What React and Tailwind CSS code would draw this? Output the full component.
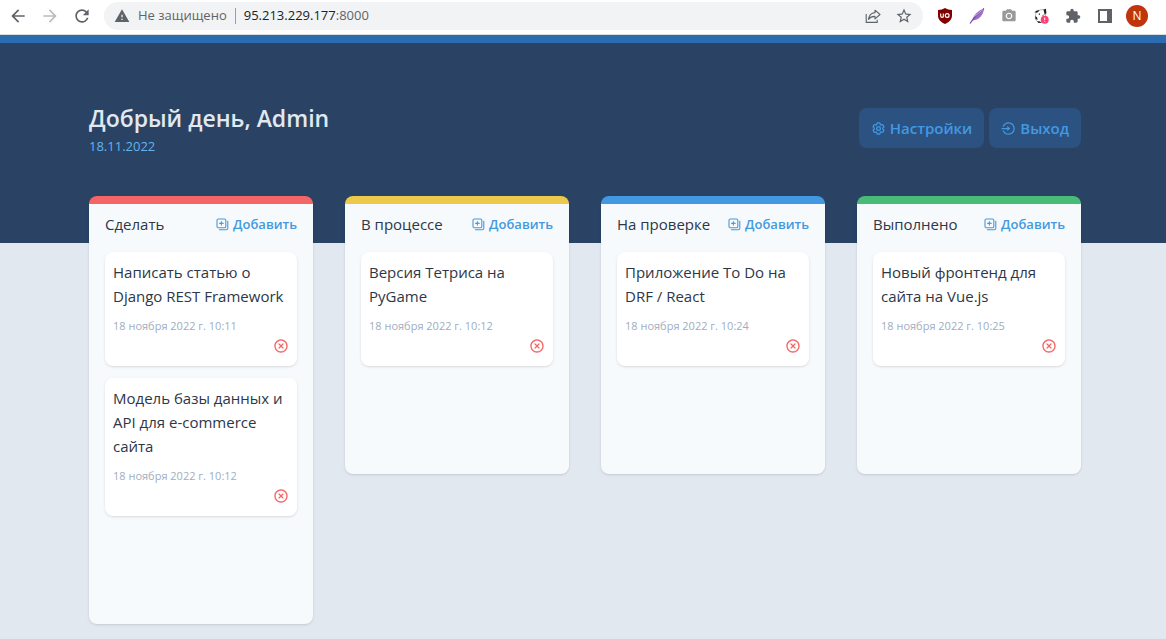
import React, { useState } from 'react'
import { RiCloseCircleLine, RiLoginCircleLine } from 'react-icons/ri'
import { HiOutlineCog6Tooth } from 'react-icons/hi2'
import { MdArrowBack, MdArrowForward, MdCameraAlt, MdExtension, MdRefresh, MdStarBorder, MdWarning } from 'react-icons/md'

const COLUMNS = [
  {
    id: 'todo',
    title: 'Сделать',
    border: 'border-[#f56565]',
    tasks: [
      { id: 1, text: 'Написать статью о Django REST Framework', date: '18 ноября 2022 г. 10:11' },
      { id: 2, text: 'Модель базы данных и API для e-commerce сайта', date: '18 ноября 2022 г. 10:12' },
    ],
  },
  {
    id: 'progress',
    title: 'В процессе',
    border: 'border-[#ecc94b]',
    tasks: [{ id: 3, text: 'Версия Тетриса на PyGame', date: '18 ноября 2022 г. 10:12' }],
  },
  {
    id: 'review',
    title: 'На проверке',
    border: 'border-[#4299e1]',
    tasks: [{ id: 4, text: 'Приложение To Do на DRF / React', date: '18 ноября 2022 г. 10:24' }],
  },
  {
    id: 'done',
    title: 'Выполнено',
    border: 'border-[#48bb78]',
    tasks: [{ id: 5, text: 'Новый фронтенд для сайта на Vue.js', date: '18 ноября 2022 г. 10:25' }],
  },
]

// ── Icons ─────────────────────────────────────────────────────────────────────
function AddIcon() {
  return (
    <svg viewBox="0 0 13 13" className="size-[13px] shrink-0" fill="none" stroke="currentColor" strokeWidth="1.1">
      <rect x="1" y="1" width="8.8" height="8.8" rx="1.4" />
      <path d="M5.4 3.2v4.400M3.200 5.400h4.400M11.800 2.800v7.400c0 1-.6 1.600-1.600 1.600H3" />
    </svg>
  )
}

function ShareIcon() {
  return (
    <svg viewBox="0 0 16 16" className="size-4" fill="none" stroke="currentColor" strokeWidth="1.1" strokeLinejoin="round">
      <path d="M1.2 6v8.4h11v-2.6" />
      <path d="M10 2.2l5 4.3-5 4.3V8.4C7 8.3 5 9.2 3.4 11.4 3.9 7.6 6.2 5 10 4.6z" />
    </svg>
  )
}

function ShieldIcon() {
  return (
    <svg viewBox="0 0 16 16" className="size-4">
      <path d="M8 0c2 1.3 4.2 1.9 7 2v5.5c0 4-2.8 6.5-7 8.500-4.200-2-7-4.500-7-8.500V2c2.800-.1 5-.7 7-2z" fill="#800000" />
      <path d="M3.700 5.500v2.600a1.300 1.300 0 0 0 2.600 0V5.500M6.300 5.500v4" fill="none" stroke="#fff" strokeWidth="1.1" />
      <circle cx="10.2" cy="7.5" r="1.9" fill="none" stroke="#fff" strokeWidth="1.2" />
    </svg>
  )
}

function FeatherIcon() {
  return (
    <svg viewBox="0 0 16 16" className="size-4">
      <path d="M15 .5c-.2 3.500-2 7.500-5 9.700-2 1.500-4.400 2-6.500 2.300C3.600 8 9 2.500 15 .5z" fill="#9b6fc6" />
      <path d="M1 15.500C4.500 10 9 5.500 15 .5" fill="none" stroke="#7443a8" strokeWidth="1.1" />
      <path d="M5.500 8.500L14 1.500" stroke="#cfb4e6" strokeWidth="1" />
    </svg>
  )
}

function CowIcon() {
  return (
    <svg viewBox="0 0 16 16" className="size-4">
      <path d="M4 3.500C6 1.500 10 1 12.500 2.500c1 3.500-.5 8.500-4 12-3 .5-5-1-6-3.500C2 8 2.500 5.500 4 3.500z" fill="#fff" stroke="#999" strokeWidth=".7" />
      <path d="M1.500 4.500C3 2.500 5 2 6.500 2.500L4.500 4.500zM10.500 1.500l2.500-.8.3 4.300-1.600 2zM2.200 8l2 1.500.3 2.500-2-1zM5.300 6l1.500-.8.2 2zM9.300 7.500l1-1.200.2 1.800zM4 13l3 .5 1.500 1.200-3 .3z" fill="#222" />
      <circle cx="11.700" cy="11.700" r="4" fill="#ff3f74" />
      <path d="M11.700 9.700v2.400M11.700 12.900v.8" stroke="#fff" strokeWidth="1" />
    </svg>
  )
}

function PanelIcon() {
  return (
    <svg viewBox="0 0 14 14" className="size-3.5">
      <path d="M0 0h14v14H0zM2 2v10h7V2z" fill="#5f6368" fillRule="evenodd" />
    </svg>
  )
}

// ── Browser bar ───────────────────────────────────────────────────────────────
function BrowserBar() {
  return (
    <div className="flex h-[35px] items-start border-b border-[#dadce0] bg-white pt-0.5 pr-[18px] pl-2 text-[#5f6368]">
      <div className="flex h-7 items-center gap-3">
        <button type="button" aria-label="Назад"><MdArrowBack className="size-5" /></button>
        <button type="button" aria-label="Вперёд" className="text-[#babcbe]"><MdArrowForward className="size-5" /></button>
        <button type="button" aria-label="Обновить"><MdRefresh className="size-5" /></button>
      </div>
      <div className="ml-3 flex h-7 flex-1 items-center rounded-full bg-[#f1f3f4] px-2.5 text-[13px]">
        <MdWarning className="size-4 shrink-0" />
        <span className="ml-2">Не защищено</span>
        <span className="mx-2 h-4 w-px bg-[#9aa0a6]" />
        <span className="flex-1"><span className="text-[#202124]">95.213.229.177</span>:8000</span>
        <button type="button" aria-label="Поделиться"><ShareIcon /></button>
        <button type="button" aria-label="В закладки" className="ml-3.5"><MdStarBorder className="size-[18px]" /></button>
      </div>
      <div className="ml-3.5 flex h-7 items-center gap-4">
        <button type="button" aria-label="uBlock"><ShieldIcon /></button>
        <button type="button" aria-label="Перо"><FeatherIcon /></button>
        <button type="button" aria-label="Снимок" className="text-[#999]"><MdCameraAlt className="size-4" /></button>
        <button type="button" aria-label="Расширение"><CowIcon /></button>
        <button type="button" aria-label="Расширения"><MdExtension className="size-4" /></button>
        <button type="button" aria-label="Панель" className="px-px"><PanelIcon /></button>
        <button type="button" className="-ml-[3px] size-[22px] rounded-full bg-[#bf360c] text-xs text-white">N</button>
      </div>
    </div>
  )
}

// ── Board ─────────────────────────────────────────────────────────────────────
function HeaderButton({ icon, children }) {
  return (
    <button
      type="button"
      className="flex h-10 items-center gap-1 rounded-lg bg-[#2c5282] px-3 text-[15px] font-semibold text-[#4299e1]"
    >
      {icon}
      {children}
    </button>
  )
}

function TaskCard({ task, onRemove }) {
  return (
    <li className="rounded-lg bg-white p-2 shadow-sm">
      <p className="text-[15px] leading-6 text-[#2d3748]">{task.text}</p>
      <p className="mt-2 text-[11px] leading-5 text-[#a0aec0]">{task.date}</p>
      <div className="flex justify-end pb-0.5">
        <button type="button" aria-label="Удалить" onClick={onRemove} className="flex h-5 items-center text-[#f56565]">
          <RiCloseCircleLine className="size-4" />
        </button>
      </div>
    </li>
  )
}

function Column({ column, onRemove }) {
  return (
    <section className={`rounded-lg border-t-8 bg-[#f7fafc] px-4 pt-2 pb-[108px] shadow ${column.border}`}>
      <div className="flex h-6 items-center justify-between whitespace-nowrap">
        <h2 className="text-[15px] font-medium text-[#2d3748]">{column.title}</h2>
        <button type="button" className="flex items-center gap-1 text-[13px] leading-6 font-semibold text-[#4299e1]">
          <AddIcon />
          Добавить
        </button>
      </div>
      <ul className="mt-4 flex flex-col gap-3">
        {column.tasks.map((task) => (
          <TaskCard key={task.id} task={task} onRemove={() => onRemove(task.id)} />
        ))}
      </ul>
    </section>
  )
}

export default function App() {
  const [columns, setColumns] = useState(COLUMNS)

  const removeTask = (id) => {
    setColumns((prev) => prev.map((c) => ({ ...c, tasks: c.tasks.filter((t) => t.id !== id) })))
  }

  return (
    <div className="min-h-screen bg-[#e2e8f0] font-['Open_Sans','Noto_Sans',sans-serif]">
      <BrowserBar />
      <header className="h-52 border-t-8 border-[#2b6cb0] bg-[#2a4365] pt-[65px] pl-1">
        <div className="mx-auto flex max-w-5xl items-start justify-between px-4">
          <div>
            <h1 className="text-[23px] leading-5 font-semibold text-[#e2e8f0]">Добрый день, Admin</h1>
            <p className="mt-2 text-[13px] leading-5 text-[#63b3ed]">18.11.2022</p>
          </div>
          <div className="flex gap-[5px]">
            <HeaderButton icon={<HiOutlineCog6Tooth strokeWidth="2" className="size-[15px]" />}>Настройки</HeaderButton>
            <HeaderButton icon={<RiLoginCircleLine className="size-[15px]" />}>Выход</HeaderButton>
          </div>
        </div>
      </header>
      <main className="-mt-[47px] pb-3 pl-1">
        <div className="mx-auto grid max-w-5xl grid-cols-4 items-start gap-8 px-4">
          {columns.map((column) => (
            <Column key={column.id} column={column} onRemove={removeTask} />
          ))}
        </div>
      </main>
    </div>
  )
}
